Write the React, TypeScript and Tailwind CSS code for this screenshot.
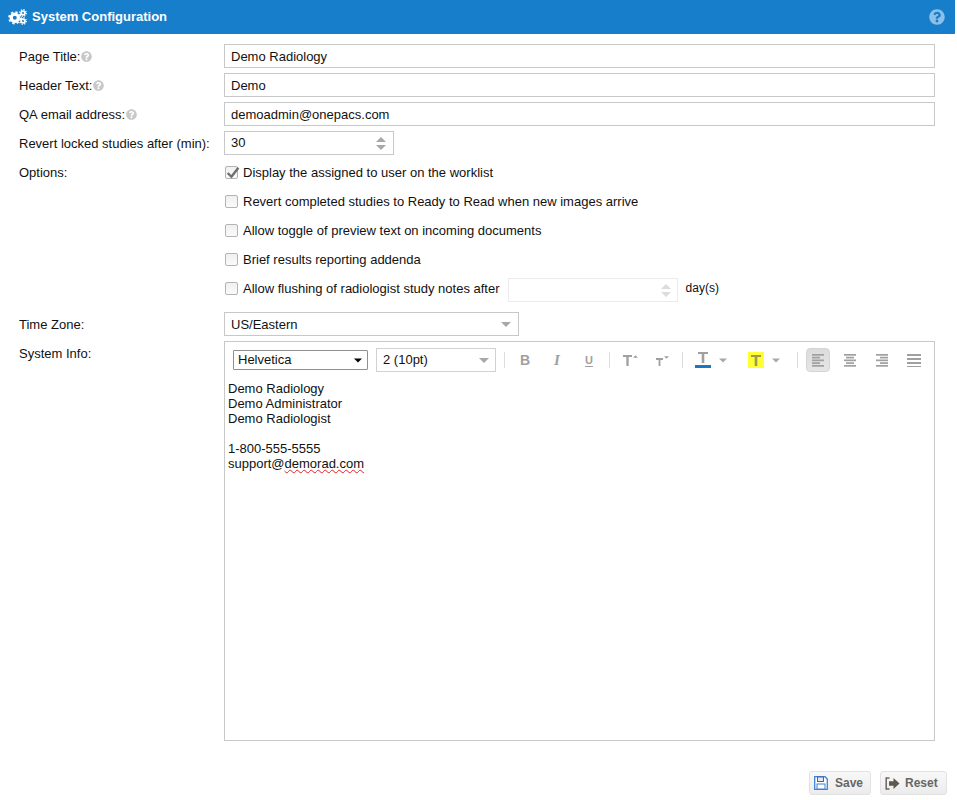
import React from "react";
import { FaQuestionCircle } from "react-icons/fa";

function Help() {
  return <FaQuestionCircle className="text-[#c8c8c8] w-[11px] h-[11px] ml-px shrink-0" />;
}

function Gears() {
  return (
    <svg width="19" height="16" viewBox="0 0 19 16" fill="none" stroke="#fff" className="shrink-0">
      <circle cx="6.8" cy="8.8" r="3.6" strokeWidth="3.2" />
      <circle cx="6.8" cy="8.8" r="5.8" strokeWidth="1.7" strokeDasharray="2.3 2.25" />
      <circle cx="15" cy="4" r="1.9" strokeWidth="1.8" />
      <circle cx="15" cy="4" r="3.3" strokeWidth="1.3" strokeDasharray="1.3 1.29" />
      <circle cx="15" cy="12" r="1.9" strokeWidth="1.8" />
      <circle cx="15" cy="12" r="3.3" strokeWidth="1.3" strokeDasharray="1.3 1.29" />
    </svg>
  );
}

function Tri({ up = false, className = "" }: { up?: boolean; className?: string }) {
  return (
    <svg width="10" height="5" viewBox="0 0 10 5" className={className}>
      <path d={up ? "M0 5L5 0L10 5Z" : "M0 0H10L5 5Z"} fill="currentColor" />
    </svg>
  );
}

function Spin({ className = "" }: { className?: string }) {
  return (
    <span className={`flex flex-col gap-[3px] ${className}`}>
      <Tri up />
      <Tri />
    </span>
  );
}

function Row({ label, help, children }: { label: string; help?: boolean; children: React.ReactNode }) {
  return (
    <div className="flex items-start">
      <div className="w-[205px] h-[24px] flex items-center shrink-0 text-[#111]">
        <span className="mt-[2px]">{label}</span>
        {help && <Help />}
      </div>
      <div className="flex-1 min-w-0">{children}</div>
    </div>
  );
}

function TextBox({ value }: { value: string }) {
  return (
    <input
      readOnly
      value={value}
      className="w-full h-[24px] border border-[#c8c8c8] bg-white px-[6px] text-[#111] outline-none"
    />
  );
}

function Check({ label, checked = false, children }: { label: string; checked?: boolean; children?: React.ReactNode }) {
  return (
    <div className="flex items-start text-[#111]">
      <div className="h-[24px] flex items-center pl-[1px]">
        <span className="relative w-[13px] h-[13px] rounded-[2px] border border-[#b4b4b4] bg-gradient-to-b from-[#f0f0f0] to-[#fafafa] shrink-0">
          {checked && (
            <svg viewBox="0 0 14 14" className="absolute left-[-1px] top-[-2px] w-[15px] h-[15px]">
              <path d="M2.5 7.5L6 11L12.5 2.5" fill="none" stroke="#6e6e6e" strokeWidth="2.2" />
            </svg>
          )}
        </span>
        <span className="ml-[5px] mt-[2px]">{label}</span>
      </div>
      {children}
    </div>
  );
}

function Divider() {
  return <span className="block w-px h-[16px] bg-[#dcdcdc] shrink-0" />;
}

function TBtn({ children, className = "" }: { children: React.ReactNode; className?: string }) {
  return (
    <span className={`w-[24px] h-[24px] flex items-center justify-center text-[#a0a0a0] shrink-0 ${className}`}>
      {children}
    </span>
  );
}

function TGlyph({ w, h }: { w: number; h: number }) {
  const stem = w * 0.26;
  const bar = 2;
  return (
    <svg width={w} height={h} viewBox={`0 0 ${w} ${h}`}>
      <rect x="0" y="0" width={w} height={bar} fill="currentColor" />
      <rect x={(w - stem) / 2} y="0" width={stem} height={h} fill="currentColor" />
    </svg>
  );
}

function Align({ lines, pitch = 2.75, thick = 1.7 }: { lines: [number, number][]; pitch?: number; thick?: number }) {
  return (
    <svg width="16" height="14" viewBox="0 0 16 14" className="text-[#a0a0a0]">
      {lines.map(([x, w], i) => (
        <rect key={i} x={x} y={i * pitch + 1} width={w} height={thick} fill="currentColor" />
      ))}
    </svg>
  );
}

function SaveIcon() {
  return (
    <svg width="14" height="14" viewBox="0 0 14 14" className="shrink-0">
      <path d="M0.7 0.7H11L13.3 3V13.3H0.7Z" fill="#fff" stroke="#3f80d8" strokeWidth="1.3" />
      <rect x="3.5" y="1" width="6" height="4.5" fill="#dfe6f5" stroke="#5a5f90" strokeWidth="1" />
      <rect x="3" y="8" width="8" height="5" fill="#fff" stroke="#3f80d8" strokeWidth="1" />
    </svg>
  );
}

function ResetIcon() {
  return (
    <svg width="15" height="13" viewBox="0 0 15 13" className="shrink-0">
      <path d="M4.5 1H1.2V12H4.5" fill="none" stroke="#6b6459" strokeWidth="1.5" />
      <path d="M4 4.2H8.5V1L14.5 6.5L8.5 12V8.8H4Z" fill="#5f5a50" />
    </svg>
  );
}

export default function App() {
  return (
    <div className="w-[955px] h-[800px] bg-white flex flex-col overflow-hidden text-[13px] font-['Liberation_Sans',Arial,sans-serif]">
      <header className="h-[34px] shrink-0 bg-[#167ecb] flex items-center justify-between pl-[8px] pr-[10px] text-white">
        <div className="flex items-center">
          <Gears />
          <span className="ml-[5px] font-bold">System Configuration</span>
        </div>
        <FaQuestionCircle className="w-[16px] h-[16px] text-[#8cc0e8]" />
      </header>

      <main className="flex-1 pl-[19px] pr-[20px] pt-[10px] flex flex-col gap-[5px]">
        <Row label="Page Title:" help>
          <TextBox value="Demo Radiology" />
        </Row>
        <Row label="Header Text:" help>
          <TextBox value="Demo" />
        </Row>
        <Row label="QA email address:" help>
          <TextBox value="demoadmin@onepacs.com" />
        </Row>
        <Row label="Revert locked studies after (min):">
          <div className="w-[170px] h-[24px] border border-[#c8c8c8] px-[6px] flex items-center justify-between text-[#111]">
            <span>30</span>
            <Spin className="text-[#a8a8a8] mr-[1px]" />
          </div>
        </Row>
        <Row label="Options:">
          <div className="flex flex-col gap-[5px]">
            <Check label="Display the assigned to user on the worklist" checked />
            <Check label="Revert completed studies to Ready to Read when new images arrive" />
            <Check label="Allow toggle of preview text on incoming documents" />
            <Check label="Brief results reporting addenda" />
            <Check label="Allow flushing of radiologist study notes after">
              <span className="ml-[8px] mt-[2px] w-[170px] h-[24px] border border-[#ebebeb] flex items-center justify-end pr-[6px]">
                <Spin className="text-[#dcdcdc]" />
              </span>
              <span className="ml-[8px] h-[24px] flex items-center text-[12px]">day(s)</span>
            </Check>
          </div>
        </Row>
        <div className="mt-[5px]">
          <Row label="Time Zone:">
            <div className="w-[295px] h-[24px] border border-[#c8c8c8] pl-[6px] pr-[7px] flex items-center justify-between text-[#111]">
              <span className="mt-[2px]">US/Eastern</span>
              <Tri className="text-[#a8a8a8]" />
            </div>
          </Row>
        </div>
        <Row label="System Info:">
          <div className="h-[400px] border border-[#c8c8c8] bg-white">
            <div className="h-[36px] flex items-center pl-[8px]">
              <div className="w-[135px] h-[20px] border border-[#8f8f8f] rounded-[1px] flex items-center justify-between pl-[4px] pr-[5px] text-[#111] shrink-0">
                <span>Helvetica</span>
                <Tri className="text-black w-[8px] h-[5px]" />
              </div>
              <div className="ml-[8px] w-[120px] h-[24px] border border-[#d2d2d2] flex items-center justify-between pl-[6px] pr-[6px] text-[#111] shrink-0">
                <span>2 (10pt)</span>
                <Tri className="text-[#a8a8a8]" />
              </div>
              <div className="ml-[8px]"><Divider /></div>
              <div className="ml-[8px] flex items-center gap-[8px]">
                <TBtn><span className="font-bold text-[14px]">B</span></TBtn>
                <TBtn><span className="italic font-bold text-[15px] font-['Liberation_Serif',serif]">I</span></TBtn>
                <TBtn><span className="font-bold text-[11px] underline underline-offset-2">U</span></TBtn>
              </div>
              <div className="ml-[8px]"><Divider /></div>
              <div className="ml-[8px] flex items-center gap-[8px]">
                <TBtn>
                  <span className="flex items-start"><TGlyph w={9} h={11} /><Tri up className="w-[5px] h-[3px] ml-px" /></span>
                </TBtn>
                <TBtn>
                  <span className="flex items-start pt-[2px]"><span className="pt-[2px]"><TGlyph w={7} h={8} /></span><Tri className="w-[5px] h-[3px] ml-px" /></span>
                </TBtn>
              </div>
              <div className="ml-[8px]"><Divider /></div>
              <div className="ml-[12px] w-[16px] h-[16px] flex flex-col items-center text-[#a0a0a0] shrink-0">
                <TGlyph w={10} h={11} />
                <span className="mt-[2px] w-[16px] h-[3px] bg-[#1a78c2] shrink-0" />
              </div>
              <Tri className="ml-[8px] text-[#a8a8a8] w-[8px] h-[5px] shrink-0" />
              <div className="ml-[21px] w-[16px] h-[16px] bg-[#ffff33] flex items-center justify-center text-[#9a9a50] shrink-0">
                <TGlyph w={10} h={11} />
              </div>
              <Tri className="ml-[8px] text-[#a8a8a8] w-[8px] h-[5px] shrink-0" />
              <div className="ml-[17px]"><Divider /></div>
              <div className="ml-[8px] flex items-center gap-[8px]">
                <TBtn className="bg-gradient-to-b from-[#dcdcdc] to-[#e6e6e6] border border-[#d4d4d4] rounded-[4px]">
                  <Align lines={[[2, 12], [2, 8], [2, 12], [2, 8], [2, 12]]} />
                </TBtn>
                <TBtn><Align lines={[[2, 12], [4, 8], [2, 12], [4, 8], [2, 12]]} /></TBtn>
                <TBtn><Align lines={[[2, 12], [6, 8], [2, 12], [6, 8], [2, 12]]} /></TBtn>
                <TBtn><Align pitch={4} thick={2} lines={[[1, 14], [1, 14], [1, 14], [1, 14]]} /></TBtn>
              </div>
            </div>
            <div className="pl-[3px] pt-[3px] leading-[15px] text-[#111]">
              <div>Demo Radiology</div>
              <div>Demo Administrator</div>
              <div>Demo Radiologist</div>
              <div className="h-[15px]" />
              <div>1-800-555-5555</div>
              <div>
                support@<span className="underline decoration-wavy decoration-[#e02020] decoration-1">demorad.com</span>
              </div>
            </div>
          </div>
        </Row>
      </main>

      <footer className="shrink-0 h-[29px] pr-[8px] flex justify-end items-start">
        <button className="w-[62px] h-[24px] border border-[#e2e2e2] rounded-[3px] bg-gradient-to-b from-[#f8f8f8] to-[#ececec] flex items-center pl-[4px] text-[12px] text-[#666] font-bold">
          <SaveIcon />
          <span className="ml-[7px]">Save</span>
        </button>
        <button className="ml-[9px] w-[67px] h-[24px] border border-[#e2e2e2] rounded-[3px] bg-gradient-to-b from-[#f8f8f8] to-[#ececec] flex items-center pl-[4px] text-[12px] text-[#666] font-bold">
          <ResetIcon />
          <span className="ml-[5px]">Reset</span>
        </button>
      </footer>
    </div>
  );
}
